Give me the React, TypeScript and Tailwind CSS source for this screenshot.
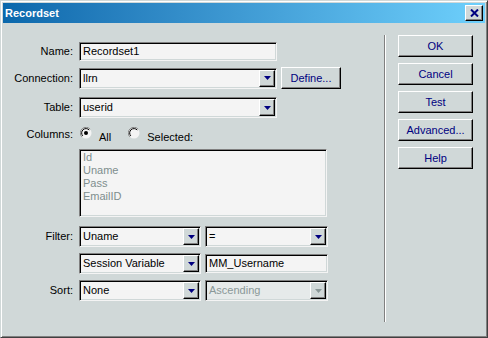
import React from "react";

const sunken =
    "border border-t-[#808080] border-l-[#808080] border-b-[#f4f4f4] border-r-[#f4f4f4] shadow-[inset_1px_1px_0_#000,inset_-1px_-1px_0_#d0d8d8]";
const raised =
    "border border-t-white border-l-white border-b-black border-r-black shadow-[inset_-1px_-1px_0_#808080]";

function Arrow({ disabled }: { disabled?: boolean }) {
    return (
        <div className={`w-[16px] h-full bg-[#d0d8d8] flex items-center justify-center shrink-0 ${raised}`}>
            <svg width="7" height="4" viewBox="0 0 7 4">
                <polygon points="0,0 7,0 3.5,4" fill={disabled ? "#8a9898" : "#000080"} />
            </svg>
        </div>
    );
}

function Select({ value, width, disabled }: { value: string; width: string; disabled?: boolean }) {
    return (
        <div className={`${width} h-[21px] flex p-[1px] ${disabled ? "bg-[#e6eaea]" : "bg-[#f4f4f4]"} ${sunken}`}>
            <div className={`flex-1 pl-[2px] leading-[17px] ${disabled ? "text-[#8a9898]" : "text-black"}`}>{value}</div>
            <Arrow disabled={disabled} />
        </div>
    );
}

function Input({ value, width }: { value: string; width: string }) {
    return (
        <div className={`${width} h-[19px] bg-[#f4f4f4] pl-[3px] leading-[17px] ${sunken}`}>{value}</div>
    );
}

function Button({ label, width = "w-[75px]" }: { label: string; width?: string }) {
    return (
        <div className={`${width} h-[22px] flex items-center justify-center bg-[#d0d8d8] text-[#000080] ${raised}`}>
            {label}
        </div>
    );
}

function Radio({ checked }: { checked?: boolean }) {
    return (
        <svg width="12" height="12" viewBox="0 0 12 12">
            <circle cx="6" cy="6" r="5.5" fill="#f4f4f4" />
            <path d="M10.2 2.2 A5.5 5.5 0 0 0 1.8 9.8" stroke="#808080" strokeWidth="1" fill="none" />
            <path d="M9.2 3 A4.3 4.3 0 0 0 2.8 8.9" stroke="#000" strokeWidth="1" fill="none" />
            {checked && <circle cx="6" cy="6" r="2" fill="#000" />}
        </svg>
    );
}

function Label({ text }: { text: string }) {
    return <div className="w-[76px] pr-[6px] text-right shrink-0">{text}</div>;
}

export default function App() {
    return (
        <div className="w-[488px] h-[338px] bg-[#d0d8d8] border border-t-[#d0d8d8] border-l-[#d0d8d8] border-r-[#404040] border-b-[#404040] shadow-[inset_1px_1px_0_#fff,inset_-1px_-1px_0_#808080] p-[2px] flex flex-col text-[11px] text-black font-[Liberation_Sans,Arial,sans-serif]">
            <div className="h-[20px] flex items-center justify-between bg-gradient-to-r from-[#0a68ac] to-[#6ed0fc] pl-[2px] pr-[2px]">
                <span className="text-white font-bold">Recordset</span>
                <div className={`w-[18px] h-[16px] flex items-center justify-center bg-[#d0d8d8] ${raised}`}>
                    <svg width="9" height="8" viewBox="0 0 9 8">
                        <path d="M1 0.5 L8 7.5 M8 0.5 L1 7.5" stroke="#000080" strokeWidth="2" />
                    </svg>
                </div>
            </div>

            <div className="flex flex-1">
                <div className="w-[381px] flex flex-col pt-[19px]">
                    <div className="flex items-center">
                        <Label text="Name:" />
                        <Input value="Recordset1" width="w-[198px]" />
                    </div>
                    <div className="flex items-center mt-[6px]">
                        <Label text="Connection:" />
                        <Select value="llrn" width="w-[198px]" />
                        <div className="ml-[4px]">
                            <Button label="Define..." width="w-[60px]" />
                        </div>
                    </div>
                    <div className="flex items-center mt-[8px]">
                        <Label text="Table:" />
                        <Select value="userid" width="w-[198px]" />
                    </div>
                    <div className="flex items-start mt-[8px] h-[14px]">
                        <Label text="Columns:" />
                        <div className="flex items-start ml-[1px]">
                            <div className="mt-[1px]"><Radio checked /></div>
                            <span className="ml-[7px] mt-[3px]">All</span>
                            <div className="ml-[17px] mt-[1px]"><Radio /></div>
                            <span className="ml-[7px] mt-[3px]">Selected:</span>
                        </div>
                    </div>
                    <div className="flex mt-[9px]">
                        <div className="w-[76px] shrink-0" />
                        <div className={`w-[248px] h-[68px] bg-[#f4f4f4] pl-[3px] pt-[1px] leading-[13px] text-[#7e8e8e] ${sunken}`}>
                            <div>Id</div>
                            <div>Uname</div>
                            <div>Pass</div>
                            <div>EmailID</div>
                        </div>
                    </div>
                    <div className="flex items-center mt-[9px]">
                        <Label text="Filter:" />
                        <Select value="Uname" width="w-[122px]" />
                        <div className="ml-[4px]"><Select value="=" width="w-[123px]" /></div>
                    </div>
                    <div className="flex items-center mt-[6px]">
                        <Label text="" />
                        <Select value="Session Variable" width="w-[122px]" />
                        <div className="ml-[4px]"><Input value="MM_Username" width="w-[123px]" /></div>
                    </div>
                    <div className="flex items-center mt-[6px]">
                        <Label text="Sort:" />
                        <Select value="None" width="w-[122px]" />
                        <div className="ml-[4px]"><Select value="Ascending" width="w-[123px]" disabled /></div>
                    </div>
                </div>

                <div className="mt-[12px] h-[287px] w-[2px] border-l border-l-[#808080] border-r border-r-white" />

                <div className="ml-[12px] mt-[12px] flex flex-col gap-[6px]">
                    <Button label="OK" />
                    <Button label="Cancel" />
                    <Button label="Test" />
                    <Button label="Advanced..." />
                    <Button label="Help" />
                </div>
            </div>
        </div>
    );
}
